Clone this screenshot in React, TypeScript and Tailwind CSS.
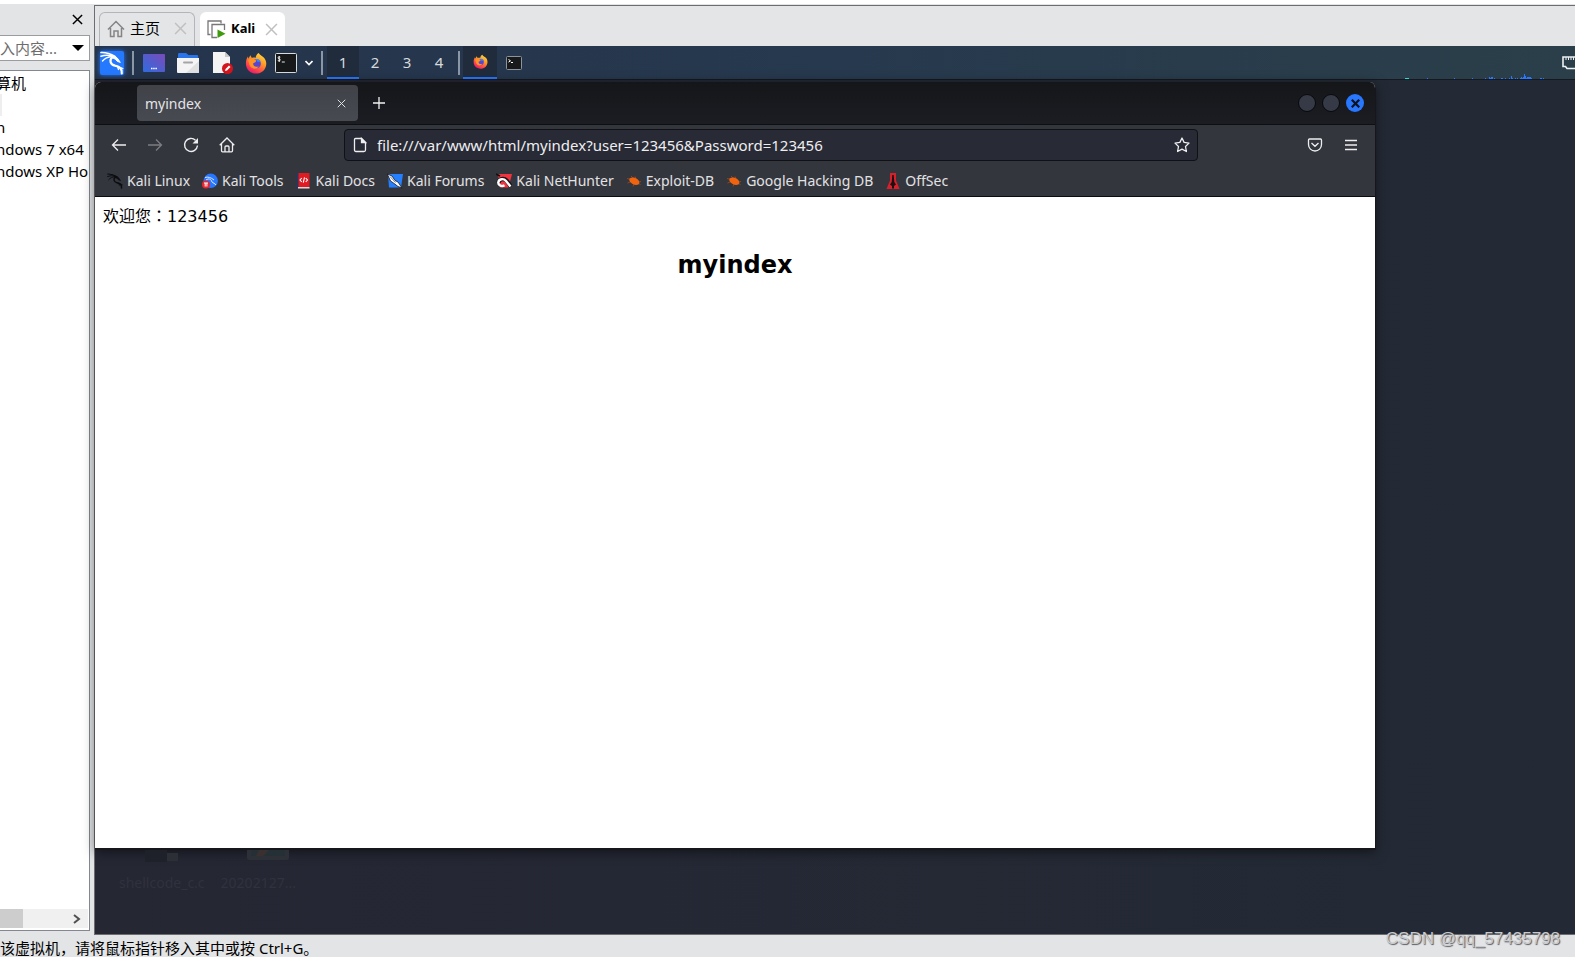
import type { ReactNode } from 'react';
import clsx from 'clsx';

const bookmarks = [
  { label: 'Kali Linux', icon: <DragonIcon className="size-4 text-[#0c0d10]" /> },
  { label: 'Kali Tools', icon: <ToolsIcon /> },
  { label: 'Kali Docs', icon: <DocsIcon /> },
  { label: 'Kali Forums', icon: <ForumsIcon /> },
  { label: 'Kali NetHunter', icon: <NetHunterIcon /> },
  { label: 'Exploit-DB', icon: <BugIcon /> },
  { label: 'Google Hacking DB', icon: <BugIcon /> },
  { label: 'OffSec', icon: <OffSecIcon /> },
];

const machines = ['', 'n', 'ndows 7 x64', 'ndows XP Ho'];

// x, height pairs of the cpu graph bars
const cpuBars = [
  [22, 1], [49, 1], [67, 1], [80, 1], [84, 2], [85, 1], [86, 2], [87, 2], [89, 1], [96, 1],
  [97, 1], [100, 1], [104, 1], [106, 3], [107, 1], [110, 1], [112, 1], [115, 1], [116, 2],
  [117, 1], [118, 2], [119, 5], [120, 3], [121, 1], [122, 2], [123, 2], [124, 2], [125, 2],
  [126, 1], [135, 1], [136, 1], [138, 1],
];

function DragonIcon({ className }: { className?: string }) {
  return (
    <svg viewBox="0 0 24 24" className={className} fill="none" stroke="currentColor" strokeLinecap="round">
      <path d="M1 1.500C6 1.300 11 3 15 5.500" strokeWidth="1.700" />
      <path d="M1 5.200C6 3.400 10 4 14 5.500" strokeWidth="1.500" />
      <path d="M2.500 10C5 7 8.500 5.800 12 5.500" strokeWidth="1.400" />
      <path d="M11.500 4.800C14.500 4.600 17 6.200 18 8L20.300 11.400L17.200 10.300L15.300 8.200L12 6.500Z" fill="currentColor" strokeWidth="1" />
      <path d="M12.500 6.200C9 9 10.200 13.600 15 14.600C20 15.500 22.300 18 21.800 22.500" strokeWidth="2.200" />
      <path d="M16 14.800L22.800 17.500M17.500 15.500L18.500 18.500" strokeWidth="1.300" />
    </svg>
  );
}

function ToolsIcon() {
  return (
    <svg viewBox="0 0 16 16" className="size-4">
      <circle cx="8.700" cy="7.800" r="7.200" fill="#2777ff" />
      <path d="M3 4.500C6 3.500 9 4.500 12 7M4 7C7 5 9 6 10 9C11 10 13 10.500 14 12" fill="none" stroke="#dbe8ff" strokeWidth="1" />
      <circle cx="4" cy="11.500" r="4" fill="#e8262d" />
      <path d="M2 10h4M3.200 10v3.500M4.900 10v3.500" stroke="#fff" strokeWidth="1" />
    </svg>
  );
}

function DocsIcon() {
  return (
    <svg viewBox="-1 0 16 16" className="size-4">
      <path d="M0 0h12.500v14H0z" fill="#e01b22" />
      <path d="M0 0h1.500v16H0z" fill="#22376b" />
      <path d="M1 14h11.500v1.500H1z" fill="#e4dcdc" />
      <path d="M4.800 5L3 7l1.800 2M8.700 5l1.800 2-1.800 2M7.500 4.300l-1.200 5.400" fill="none" stroke="#fff" strokeWidth="1.100" />
    </svg>
  );
}

function ForumsIcon() {
  return (
    <svg viewBox="0 0 16 16" className="size-4">
      <path d="M1 1h15l-2 13.500H2z" fill="#2580ff" />
      <path d="M.3 1L5 3l3 4.500 3 1.500 4 6-4-1.500-4.500-3.500L3.500 8z" fill="#fff" stroke="#15171c" strokeWidth=".8" />
      <path d="M3 3.500l5.500 6" stroke="#4a4f58" strokeWidth=".7" />
    </svg>
  );
}

function NetHunterIcon() {
  return (
    <svg viewBox="0 0 16 16" className="size-4">
      <path d="M2 1h14l-3.500 13.500H4z" fill="#f3333d" />
      <path d="M0 1l4 2" stroke="#111" strokeWidth="1.600" />
      <path d="M2.500 9.500C3.500 5.500 8 5 10.500 7.500L15 13.500" fill="none" stroke="#15171c" strokeWidth="4.400" />
      <path d="M8.500 12.300C5.500 14 2 12.200 2.300 9.300C2.800 5.800 7.500 5 10 8L14.500 13.500" fill="none" stroke="#fff" strokeWidth="2.400" />
    </svg>
  );
}

function BugIcon() {
  return (
    <svg viewBox="0 0 16 16" className="size-4">
      <path d="M1 5.500l4 1M1.500 10l4-1.500M5 3l2 2M9 3.500l1 2M15 8.500l-3 .5M14.500 11.500L12 10M7 13.500l1-2.500" stroke="#8b4622" strokeWidth="1" fill="none" />
      <path d="M3.500 5.500C6 3.800 9 4.300 11.500 6.300C13.500 8 14 10 12.500 11.500C9.500 12.500 6.500 11.500 4.800 9.500C3.500 8.500 3 7 3.500 5.500Z" fill="#f0640f" />
    </svg>
  );
}

function OffSecIcon() {
  return (
    <svg viewBox="0 0 16 16" className="size-4">
      <path d="M5 0h6v7.500L14.500 16h-13L5 7.500z" fill="#d9202a" />
      <path d="M7.300 2h1.400l.6 7 1.700 2.500-2 1.500v2.500H7V13l-2-1.500L6.700 9z" fill="#1c1013" />
    </svg>
  );
}

function FirefoxIcon({ className }: { className?: string }) {
  return (
    <svg viewBox="0 0 24 24" className={className}>
      <defs>
        <linearGradient id="ffBody" x1=".85" y1="0" x2=".25" y2="1">
          <stop offset="0" stopColor="#ffe14a" />
          <stop offset=".4" stopColor="#ff9a24" />
          <stop offset=".75" stopColor="#ff4350" />
          <stop offset="1" stopColor="#e3186f" />
        </linearGradient>
      </defs>
      <path
        d="M15 1C15.500 3 19.500 4.500 21 6.500C22.200 8 23.300 10.500 23.200 13C23 19 18.200 23.500 12 23.500C5.500 23.500 1 18.700 1 12.500C1 9.500 1.800 7 3.200 5L3.800 7.300L5.800 3.500L7.500 6.500C9 6 10.500 6 11.500 6.500C11.800 4 13 2 15 1Z"
        fill="url(#ffBody)"
      />
      <circle cx="12.300" cy="12.800" r="5" fill="#5a45cf" />
      <path d="M11.500 8C14 7 17 8.500 17.300 12C16.500 10.500 15 10.500 14 11Z" fill="#2f8df5" />
      <path d="M3.500 9C6.500 6.300 9 8 12 9L11.800 11L9 12.200C8.500 15.500 12 17 15 15.500C12.500 20 6 18.500 4.800 14Z" fill="#ff9426" />
    </svg>
  );
}

function Separator() {
  return <span className="h-6 w-[2px] shrink-0 bg-[#8b97a6]" />;
}

function TerminalIcon({ className }: { className?: string }) {
  return (
    <svg viewBox="0 0 22 20" className={className}>
      <rect x=".5" y=".5" width="21" height="19" rx="1" fill="#16181a" stroke="#d8dadb" />
      <path d="M5.300 4.200C4 3.600 3 4 3 4.900C3 6 5.300 5.600 5.300 6.900C5.300 7.800 4 8 2.800 7.500M4.200 3v6M6.800 9h3" stroke="#fff" strokeWidth=".9" fill="none" />
    </svg>
  );
}

function IconButton({ label, children, className }: { label: string; children: ReactNode; className?: string }) {
  return (
    <button aria-label={label} className={clsx('flex shrink-0 items-center justify-center', className)}>
      {children}
    </button>
  );
}

function Cross({ className, width = 1 }: { className?: string; width?: number }) {
  return (
    <svg viewBox="0 0 12 12" className={className} stroke="currentColor" strokeWidth={width}>
      <path d="M1 1l10 10M11 1L1 11" />
    </svg>
  );
}

function Sidebar() {
  return (
    <aside className="flex w-[90px] shrink-0 flex-col pb-1 text-[15px] text-black">
      <div className="flex h-[31px] items-center justify-end pr-[7px]">
        <IconButton label="Close library">
          <Cross className="size-[11px]" width={1.6} />
        </IconButton>
      </div>
      <div className="flex h-[26px] items-center border border-l-0 border-[#9a9ca0] bg-white pr-[5px]">
        <input
          aria-label="Search"
          placeholder="入内容..."
          className="w-full min-w-0 bg-transparent placeholder:text-[#6d6d6d] focus:outline-none"
        />
        <svg viewBox="0 0 12 6" className="h-[6px] w-3 shrink-0">
          <path d="M0 0h12L6 6z" />
        </svg>
      </div>
      <div className="mt-[9px] flex flex-1 flex-col overflow-hidden border border-l-0 border-[#828790] bg-white">
        <ul className="flex-1 overflow-hidden whitespace-nowrap pt-px leading-[22px]">
          <li className="-ml-1">算机</li>
          {machines.map((name) => (
            <li key={name} className="-ml-1 h-[22px]">
              {name || <span className="block h-[22px] w-[6px] bg-[#eeeeee]" />}
            </li>
          ))}
        </ul>
        <div className="mb-[2px] mr-px flex h-[19px] items-center bg-[#f0f0f0]">
          <span className="h-full w-[23px] bg-[#cdcdcd]" />
          <svg viewBox="0 0 8 10" className="ml-auto mr-[7px] h-[10px] w-2" fill="none" stroke="#505050" strokeWidth="2">
            <path d="M1 1l5 4-5 4" />
          </svg>
        </div>
      </div>
    </aside>
  );
}

function VmTabs() {
  return (
    <div className="flex h-10 shrink-0 items-end gap-[5px] bg-[#e4e5e7] pl-1">
      <div className="flex h-[34px] items-center rounded-t-md border border-b-0 border-[#b3b5b8] px-[7px] pb-[2px]">
        <svg viewBox="0 0 18 18" className="size-[18px]" fill="none" stroke="#858585" strokeWidth="1.500">
          <path d="M1 9.500L9 1.500l8 8M3.500 8v8.500h3.500V11h4v5.500h3.500V8" />
        </svg>
        <span className="ml-[5px] text-[15px] text-black">主页</span>
        <IconButton label="Close 主页" className="ml-[14px] text-[#c0c0c0]">
          <Cross className="size-[13px]" width={1.4} />
        </IconButton>
      </div>
      <div className="flex h-[34px] items-center rounded-t-md bg-white px-[7px]">
        <svg viewBox="0 0 19 19" className="size-[19px]" fill="none" stroke="#777" strokeWidth="1.300">
          <path d="M3.500 14.500H1V1h13v2.500" />
          <path d="M10 17.500H5V4.500h12.500V10" />
          <path d="M10.500 9.500v8.500l8-4.250z" fill="#3f9a0c" stroke="none" />
        </svg>
        <span className="ml-[5px] text-[13px] font-bold text-black">Kali</span>
        <IconButton label="Close Kali" className="ml-[10px] text-[#c0c0c0]">
          <Cross className="size-[13px]" width={1.4} />
        </IconButton>
      </div>
    </div>
  );
}

function KaliPanel() {
  return (
    <div className="flex h-[34px] shrink-0 items-center overflow-hidden border-b border-[#15181f] bg-linear-to-r from-[#24344c] via-[#27394e] to-[#2a3f49] pl-[5px]">
      <IconButton label="Applications" className="size-6 rounded-[2px] bg-[#2479ff] text-white shadow-[0_0_5px_#2479ff]">
        <DragonIcon className="size-6" />
      </IconButton>
      <span className="w-2" />
      <Separator />
      <div className="ml-[9px] flex items-center gap-3">
        <IconButton label="Show desktop">
          <svg viewBox="0 0 22 18" className="h-[18px] w-[22px]">
            <defs>
              <linearGradient id="desk" x1="0" y1="1" x2="1" y2="0">
                <stop offset="0" stopColor="#2e6ce0" />
                <stop offset="1" stopColor="#7b4bb8" />
              </linearGradient>
            </defs>
            <rect width="22" height="18" rx="1" fill="url(#desk)" />
            <path d="M8 14.500h6" stroke="#fff" strokeWidth="1.500" strokeDasharray="1.500 .7" />
          </svg>
        </IconButton>
        <IconButton label="Files">
          <svg viewBox="0 0 22 20" className="h-5 w-[22px]">
            <path d="M1 6V1.200Q1 0 2.200 0H9l2.500 2H20q1.200 0 1.200 1.200V6z" fill="#2b74e8" />
            <path d="M0 5h22v14q0 1-1 1H1q-1 0-1-1z" fill="#f4f4f4" />
            <path d="M22 8v11q0 1-1 1H9z" fill="#e0e0e0" />
            <path d="M7 9.500h8" stroke="#a5a5a5" strokeWidth="2" strokeLinecap="round" />
          </svg>
        </IconButton>
        <IconButton label="Text editor">
          <svg viewBox="0 0 22 22" className="size-[22px]">
            <path d="M2 0h12l5 5v16H2z" fill="#f4f4f4" />
            <path d="M14 0l5 5h-5z" fill="#c9c9c9" />
            <circle cx="16.500" cy="16.500" r="5.500" fill="#d5151d" />
            <path d="M14 19l.5-2 3.500-3.500 1.500 1.500-3.500 3.500z" fill="#fff" />
          </svg>
        </IconButton>
        <IconButton label="Firefox">
          <FirefoxIcon className="size-[22px]" />
        </IconButton>
      </div>
      <IconButton label="Terminal" className="ml-2">
        <TerminalIcon className="h-5 w-[22px]" />
      </IconButton>
      <IconButton label="More terminals" className="mx-2">
        <svg viewBox="0 0 8 6" className="h-[6px] w-2" fill="none" stroke="#fff" strokeWidth="1.600">
          <path d="M.5 1L4 4.500 7.500 1" />
        </svg>
      </IconButton>
      <Separator />
      <div className="ml-1 flex h-full text-[15px] text-[#d6dade]">
        {[1, 2, 3, 4].map((n) => (
          <button
            key={n}
            className={clsx('w-8 border-b-2 pt-px', n === 1 ? 'border-[#2777ff] bg-[#202c3c]' : 'border-transparent')}
          >
            {n}
          </button>
        ))}
      </div>
      <span className="w-[3px]" />
      <Separator />
      <IconButton label="myindex — Firefox" className="ml-[3px] h-full w-[34px] border-b-2 border-[#2777ff] bg-[#202c3c]">
        <FirefoxIcon className="size-[15px]" />
      </IconButton>
      <IconButton label="Terminal window" className="w-[34px]">
        <svg viewBox="0 0 16 14" className="h-[14px] w-4">
          <rect x=".5" y=".5" width="15" height="13" rx="1" fill="#17191b" stroke="#8d949b" />
          <path d="M2.500 3.500l2 1.300-2 1.300M5 6.500h2" stroke="#fff" fill="none" />
        </svg>
      </IconButton>
      <svg viewBox="0 0 140 34" className="ml-auto h-[34px] w-[140px] shrink-0">
        <path d="M0 33h4" stroke="#1fe0d0" strokeWidth="2" />
        {cpuBars.map(([x, h]) => (
          <rect key={x} x={x} y={33 - h} width="1" height={h} fill="#2777ff" />
        ))}
      </svg>
      <svg viewBox="0 0 13 14" className="ml-[17px] h-[14px] w-[13px] shrink-0" fill="none" stroke="#eef1f2" strokeWidth="1.600">
        <path d="M14 1H1v9.500h2.500l1.500 2h9" />
        <path d="M4 1v3M6.500 1v3M9 1v3M11.500 1v3" strokeWidth="1" />
      </svg>
    </div>
  );
}

function BrowserTabs() {
  return (
    <div className="flex h-[43px] items-center border-b border-[#0e0f12] bg-linear-to-b from-[#15161a] to-[#1c1d22] pl-[42px] pr-[11px]">
      <div className="flex h-9 w-[221px] items-center justify-between rounded bg-linear-to-b from-[#404248] to-[#474a51] pl-2 pr-3 text-sm text-[#e4e4e6]">
        <span className="pt-px">myindex</span>
        <IconButton label="Close tab">
          <Cross className="size-[9px]" width={1.3} />
        </IconButton>
      </div>
      <IconButton label="New tab" className="ml-[15px] text-[#f2f2f2]">
        <svg viewBox="0 0 12 12" className="size-3" stroke="currentColor" strokeWidth="1.300">
          <path d="M6 0v12M0 6h12" />
        </svg>
      </IconButton>
      <div className="ml-auto flex gap-[6px]">
        <button aria-label="Minimize" className="size-[18px] rounded-full border border-[#08090b] bg-[#363a47]" />
        <button aria-label="Maximize" className="size-[18px] rounded-full border border-[#08090b] bg-[#363a47]" />
        <IconButton label="Close window" className="size-[18px] rounded-full bg-[#2777ff] text-[#0d1220]">
          <Cross className="size-[9px]" width={3} />
        </IconButton>
      </div>
    </div>
  );
}

function NavBar() {
  return (
    <div className="flex h-[40px] items-center pl-[16px] pr-[18px] text-[#eeeef0]">
      <div className="flex gap-5">
        <IconButton label="Back">
          <svg viewBox="0 0 16 16" className="size-4" fill="none" stroke="currentColor" strokeWidth="1.300">
            <path d="M15 8H1.500M7 2.500L1.500 8 7 13.500" />
          </svg>
        </IconButton>
        <IconButton label="Forward" className="text-[#7b7d83]">
          <svg viewBox="0 0 16 16" className="size-4" fill="none" stroke="currentColor" strokeWidth="1.300">
            <path d="M1 8h13.500M9 2.500L14.500 8 9 13.500" />
          </svg>
        </IconButton>
        <IconButton label="Reload">
          <svg viewBox="0 0 16 16" className="size-4" fill="none" stroke="currentColor" strokeWidth="1.400">
            <path d="M12.500 3.200A6.500 6.500 0 1 0 14.500 8.500" />
            <path d="M15 1v5.500H9.500z" fill="currentColor" stroke="none" />
          </svg>
        </IconButton>
        <IconButton label="Home">
          <svg viewBox="0 0 16 16" className="size-4" fill="none" stroke="currentColor" strokeWidth="1.300">
            <path d="M.7 8.200L8 1l7.300 7.200M2.500 6.500v7.300q0 1 1 1h9q1 0 1-1V6.500M6 14.800V10q0-1 1-1h2q1 0 1 1v4.800" />
          </svg>
        </IconButton>
      </div>
      <div className="mx-[109px] flex h-8 min-w-0 flex-1 items-center rounded border border-[#101115] bg-[#282a35] pl-2 pr-[7px]">
        <svg viewBox="0 0 14 16" className="h-4 w-[14px] shrink-0" fill="none" stroke="currentColor" strokeWidth="1.300">
          <path d="M2.500 1.500H8.500L12.500 5.500V13q0 1.500-1.500 1.500H3Q1.500 14.500 1.500 13V2.500q0-1 1-1z" />
          <path d="M8.500 1.500v4h4z" fill="currentColor" />
        </svg>
        <input
          aria-label="Address"
          defaultValue="file:///var/www/html/myindex?user=123456&Password=123456"
          className="ml-[10px] min-w-0 flex-1 bg-transparent text-[15px] focus:outline-none"
        />
        <IconButton label="Bookmark this page">
          <svg viewBox="0 0 16 16" className="size-4" fill="none" stroke="currentColor" strokeWidth="1.300" strokeLinejoin="round">
            <path d="M8 1l2.100 4.400 4.900.7-3.500 3.400.9 5-4.400-2.400-4.400 2.400.9-5L1 6.100l4.900-.7z" />
          </svg>
        </IconButton>
      </div>
      <IconButton label="Save to Pocket">
        <svg viewBox="0 0 16 14" className="h-[14px] w-4" fill="none" stroke="currentColor" strokeWidth="1.300">
          <path d="M2.500 1h11q1 0 1 1v4.500a6.500 6.500 0 0 1-13 0V2q0-1 1-1zM4.500 5L8 8.300 11.500 5" />
        </svg>
      </IconButton>
      <IconButton label="Menu" className="ml-[22px]">
        <svg viewBox="0 0 12 12" className="size-3" stroke="currentColor" strokeWidth="1.300">
          <path d="M0 1.500h12M0 6h12M0 10.500h12" />
        </svg>
      </IconButton>
    </div>
  );
}

function Browser() {
  return (
    <div className="mr-[199px] flex flex-1 flex-col overflow-hidden rounded-t-md border-r border-b-2 border-[#15171d] bg-white shadow-[0_2px_12px_rgba(0,0,0,0.5)]">
      <BrowserTabs />
      <div className="border-b border-[#0b0c0e] bg-[#34363e]">
        <NavBar />
        <nav className="flex h-[31px] items-center gap-3 pl-3">
          {bookmarks.map((b) => (
            <a key={b.label} href="#" className="flex items-center gap-1 whitespace-nowrap text-sm text-[#e2e2e4]">
              {b.icon}
              {b.label}
            </a>
          ))}
        </nav>
      </div>
      <main className="flex-1 p-2 font-['DejaVu_Sans','Noto_Sans_CJK_JP',sans-serif] text-black">
        <p className="leading-6">欢迎您：123456</p>
        <h2 className="mt-5 text-center text-2xl font-bold">myindex</h2>
      </main>
    </div>
  );
}

function DesktopIcons() {
  return (
    <div className="flex h-[84px] shrink-0 gap-4 overflow-hidden pl-6 text-sm text-[#30323e]">
      <div className="flex flex-col items-center">
        <svg viewBox="0 0 34 12" className="h-3 w-[34px]">
          <path d="M0 0h22v12H0z" fill="#1f212a" />
          <path d="M22 3h11v8H22z" fill="#2c2f36" />
        </svg>
        <span className="mt-[11px]">shellcode_c.c</span>
      </div>
      <div className="flex flex-col items-center">
        <svg viewBox="0 0 42 12" className="ml-5 h-3 w-[42px]">
          <path d="M0 0h42v8q0 2-2 2H2q-2 0-2-2z" fill="#2d3037" />
          <path d="M4 0h34v6H4z" fill="#253036" />
          <path d="M12 0h10l-6 6H9z" fill="#3a3030" />
        </svg>
        <span className="mt-[11px]">20202127...</span>
      </div>
    </div>
  );
}

export default function App() {
  return (
    <div className="relative flex min-h-screen flex-col bg-[#e3e4e6] font-['Noto_Sans','Noto_Sans_CJK_SC',sans-serif]">
      <div className="h-1 bg-white" />
      <div className="flex flex-1">
        <Sidebar />
        <div className="ml-1 mt-px flex min-w-0 flex-1 flex-col border-y border-l border-[#6b6d71]">
          <VmTabs />
          <KaliPanel />
          <div className="flex flex-1 flex-col bg-linear-to-r from-[#252733] to-[#232a35] pt-[2px]">
            <Browser />
            <DesktopIcons />
          </div>
        </div>
      </div>
      <footer className="h-[22px] overflow-hidden whitespace-nowrap text-[15px] leading-[26px] text-black">
        该虚拟机，请将鼠标指针移入其中或按 Ctrl+G。
      </footer>
      <span className="absolute bottom-2 right-[15px] font-['Liberation_Sans',sans-serif] text-[17px] leading-5 text-[#c9cacc] [text-shadow:1px_1px_1px_#55585e]">
        CSDN @qq_57435798
      </span>
    </div>
  );
}
